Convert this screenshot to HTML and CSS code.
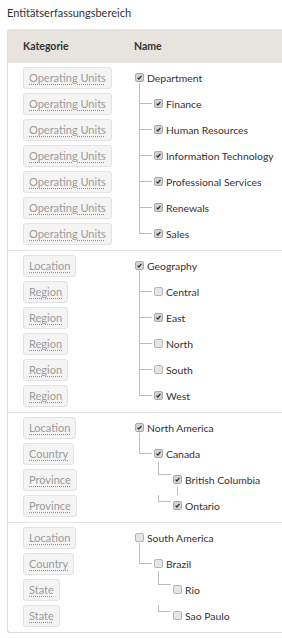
FILE: index.html
```html
<!DOCTYPE html>
<html lang="de">
<head>
<meta charset="utf-8">
<title>Entitätserfassungsbereich</title>
<link rel="stylesheet" href="styles.css">
</head>
<body>
<h1 class="title">Entitätserfassungsbereich</h1>
<div class="scope">
  <div class="head">
    <div class="head-cat">Kategorie</div>
    <div class="head-name">Name</div>
  </div>

  <div class="group first">
    <div class="cats">
      <span class="chip">Operating Units</span>
      <span class="chip">Operating Units</span>
      <span class="chip">Operating Units</span>
      <span class="chip">Operating Units</span>
      <span class="chip">Operating Units</span>
      <span class="chip">Operating Units</span>
      <span class="chip">Operating Units</span>
    </div>
    <ul class="tree">
      <li><div class="row"><span class="cb on"><svg viewBox="0 0 9 9"><path d="M2 4.6 L3.7 6.4 L7 2.4"/></svg></span>Department</div>
        <ul class="kids">
          <li class="firstkid"><div class="row"><span class="cb on"><svg viewBox="0 0 9 9"><path d="M2 4.6 L3.7 6.4 L7 2.4"/></svg></span>Finance</div></li>
          <li><div class="row"><span class="cb on"><svg viewBox="0 0 9 9"><path d="M2 4.6 L3.7 6.4 L7 2.4"/></svg></span>Human Resources</div></li>
          <li><div class="row"><span class="cb on"><svg viewBox="0 0 9 9"><path d="M2 4.6 L3.7 6.4 L7 2.4"/></svg></span>Information Technology</div></li>
          <li><div class="row"><span class="cb on"><svg viewBox="0 0 9 9"><path d="M2 4.6 L3.7 6.4 L7 2.4"/></svg></span>Professional Services</div></li>
          <li><div class="row"><span class="cb on"><svg viewBox="0 0 9 9"><path d="M2 4.6 L3.7 6.4 L7 2.4"/></svg></span>Renewals</div></li>
          <li><div class="row"><span class="cb on"><svg viewBox="0 0 9 9"><path d="M2 4.6 L3.7 6.4 L7 2.4"/></svg></span>Sales</div></li>
        </ul>
      </li>
    </ul>
  </div>

  <div class="group">
    <div class="cats">
      <span class="chip">Location</span>
      <span class="chip">Region</span>
      <span class="chip">Region</span>
      <span class="chip">Region</span>
      <span class="chip">Region</span>
      <span class="chip">Region</span>
    </div>
    <ul class="tree">
      <li><div class="row"><span class="cb on"><svg viewBox="0 0 9 9"><path d="M2 4.6 L3.7 6.4 L7 2.4"/></svg></span>Geography</div>
        <ul class="kids">
          <li class="firstkid"><div class="row"><span class="cb"></span>Central</div></li>
          <li><div class="row"><span class="cb on"><svg viewBox="0 0 9 9"><path d="M2 4.6 L3.7 6.4 L7 2.4"/></svg></span>East</div></li>
          <li><div class="row"><span class="cb"></span>North</div></li>
          <li><div class="row"><span class="cb"></span>South</div></li>
          <li><div class="row"><span class="cb on"><svg viewBox="0 0 9 9"><path d="M2 4.6 L3.7 6.4 L7 2.4"/></svg></span>West</div></li>
        </ul>
      </li>
    </ul>
  </div>

  <div class="group">
    <div class="cats">
      <span class="chip">Location</span>
      <span class="chip">Country</span>
      <span class="chip">Province</span>
      <span class="chip">Province</span>
    </div>
    <ul class="tree">
      <li><div class="row"><span class="cb on"><svg viewBox="0 0 9 9"><path d="M2 4.6 L3.7 6.4 L7 2.4"/></svg></span>North America</div>
        <ul class="kids">
          <li class="firstkid"><div class="row"><span class="cb on"><svg viewBox="0 0 9 9"><path d="M2 4.6 L3.7 6.4 L7 2.4"/></svg></span>Canada</div>
            <ul class="kids">
              <li class="firstkid stub"><div class="row"><span class="cb on"><svg viewBox="0 0 9 9"><path d="M2 4.6 L3.7 6.4 L7 2.4"/></svg></span>British Columbia</div></li>
              <li class="short"><div class="row"><span class="cb on"><svg viewBox="0 0 9 9"><path d="M2 4.6 L3.7 6.4 L7 2.4"/></svg></span>Ontario</div></li>
            </ul>
          </li>
        </ul>
      </li>
    </ul>
  </div>

  <div class="group">
    <div class="cats">
      <span class="chip">Location</span>
      <span class="chip">Country</span>
      <span class="chip">State</span>
      <span class="chip">State</span>
    </div>
    <ul class="tree">
      <li><div class="row"><span class="cb"></span>South America</div>
        <ul class="kids">
          <li class="firstkid"><div class="row"><span class="cb"></span>Brazil</div>
            <ul class="kids">
              <li class="firstkid"><div class="row"><span class="cb"></span>Rio</div></li>
              <li class="short"><div class="row"><span class="cb"></span>Sao Paulo</div></li>
            </ul>
          </li>
        </ul>
      </li>
    </ul>
  </div>
</div>
</body>
</html>
```

FILE: styles.css
```css
html, body {
  margin: 0;
  background: #fff;
}
body {
  padding: 0 0 0 7px;
  font-family: Lato, "Noto Sans", sans-serif;
  color: #333;
  overflow: hidden;
}
.title {
  margin: 0;
  height: 29px;
  box-sizing: border-box;
  padding-top: 5px;
  font-size: 11px;
  line-height: 16px;
  font-weight: normal;
  color: #333;
}
.scope {
  border-left: 1px solid #dcdcdc;
  border-bottom: 1px solid #dcdcdc;
  border-radius: 3px 0 0 3px;
  box-shadow: 0 1px 1px rgba(0,0,0,0.08);
}
.head {
  display: grid;
  grid-template-columns: 126px 1fr;
  align-items: center;
  height: 34px;
  background: #e7e4df;
  border-radius: 3px 0 0 0;
  font-size: 10.5px;
  font-weight: bold;
  color: #333;
}
.head-cat { padding-left: 15px; }
.head-name { padding-left: 0; }
.group {
  display: grid;
  grid-template-columns: 126px 1fr;
  padding: 2px 0 3px;
  border-top: 1px solid #e3e3e3;
}
.group.first { border-top: 0; }
.cats {
  display: flex;
  flex-direction: column;
  align-items: flex-start;
  padding-left: 15px;
}
.chip {
  margin: 2px 0;
  height: 22px;
  box-sizing: border-box;
  padding: 0 5px;
  border: 1px solid #e2e2e2;
  border-radius: 3px;
  background: #f4f4f4;
  font-size: 11px;
  line-height: 20px;
  color: #9b9b9b;
  text-decoration: underline dotted #8f8f8f;
  text-underline-offset: 2px;
}
.tree, .kids {
  list-style: none;
  margin: 0;
  padding: 0;
}
.tree { padding-left: 1px; }
.kids { padding-left: 19px; }
.kids > li { position: relative; }
.kids > li::before {
  content: "";
  position: absolute;
  left: -15px;
  top: -13px;
  width: 13px;
  height: 26px;
  box-sizing: border-box;
  border-left: 1px solid #bdbdbd;
  border-bottom: 1px solid #bdbdbd;
}
.kids > li.firstkid::before {
  top: -8px;
  height: 21px;
}
.kids .kids > li.firstkid::before {
  top: -6px;
  height: 14px;
}
.kids .kids > li.short::before {
  top: 2px;
  height: 7px;
}
.kids > li.stub::after {
  content: "";
  position: absolute;
  left: 4px;
  top: 20px;
  height: 8px;
  border-left: 1px solid #bdbdbd;
}
.row {
  display: flex;
  align-items: center;
  height: 26px;
  box-sizing: border-box;
  padding-bottom: 1px;
  font-size: 10.4px;
  color: #333;
  white-space: nowrap;
}
.cb {
  flex: none;
  width: 9px;
  height: 9px;
  box-sizing: border-box;
  margin-right: 3px;
  border: 1px solid #b5b5b5;
  border-radius: 2px;
  background: #e6e6e6;
  display: flex;
}
.cb.on {
  background: #d4d4d4;
  border-color: #a8a8a8;
}
.cb svg {
  width: 7px;
  height: 7px;
}
.cb svg path {
  fill: none;
  stroke: #2e2e2e;
  stroke-width: 1.6;
}
```
